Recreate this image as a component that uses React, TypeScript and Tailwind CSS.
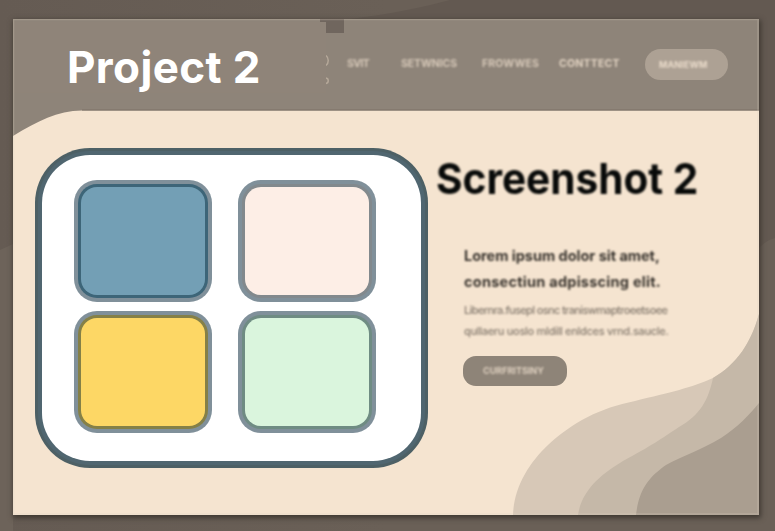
import React from "react";

const tiles = [
  { rim: "bg-[#3d6578]", fill: "bg-[#739fb5]" },
  { rim: "bg-[#82898d]", fill: "bg-[#fdeee6]" },
  { rim: "bg-[#858047]", fill: "bg-[#fdd765]" },
  { rim: "bg-[#6f8c83]", fill: "bg-[#daf5dd]" },
];

function Backdrop() {
  return (
    <svg className="absolute inset-0" width="775" height="531" viewBox="0 0 775 531">
      <defs>
        <linearGradient id="wall" x1="0" y1="0" x2="1" y2="0">
          <stop offset="0" stopColor="#655b53" />
          <stop offset="0.5" stopColor="#6a6057" />
          <stop offset="1" stopColor="#6a6057" />
        </linearGradient>
      </defs>
      <rect width="775" height="531" fill="url(#wall)" />
      <path d="M350 19C390 14 425 7 450 0H775V238C765 241 761 246 758 249V19Z" fill="#635951" />
      <path d="M0 250L13 244V531H0Z" fill="#6d635a" />
    </svg>
  );
}

function PageArt() {
  return (
    <svg className="absolute inset-0" width="746" height="496" viewBox="13 19 746 496">
      <path d="M13 19H759V110.500H82C57 111 38 121 13 136Z" fill="#8e8479" />
      <path d="M82 110H759" stroke="#7c7167" strokeWidth="1" />
      <path d="M320 19H344V33H320Z" fill="#70665e" />
      <path d="M326 55.500C329 58 329 63 326 65.500M326 78C329 78.500 329 83 326 83.500" fill="none" stroke="#b5a899" strokeWidth="1.500" />
      <path d="M13 22H326V92.500H13Z" fill="#8f8479" />
      <path d="M513 515C514 487 529 463 548 445C573 422 600 408 635 401C671 392 691 388 713 378C737 364 751 343 759 314V515Z" fill="#d7c8b7" />
      <path d="M578 515C582 489 603 473 623 461C651 446 661 439 679 427C700 415 708 401 713 378C737 364 751 343 759 314V515Z" fill="#c5b8a8" />
      <path d="M636 515C639 489 649 477 666 465C682 456 701 450 721 438C737 428 750 414 759 403V515Z" fill="#aa9e90" />
      <path d="M13.500 19V515M13 19.500H759M758 19V515M13 514H759" stroke="#ddd0c0" strokeWidth="1.500" opacity="0.25" fill="none" />
    </svg>
  );
}

export default function App() {
  return (
    <main className="relative h-[531px] w-[775px] overflow-hidden pl-[13px] pt-[19px] font-['Inter',sans-serif]">
      <Backdrop />
      <div className="relative h-[496px] w-[746px] bg-[#f5e4d0] shadow-[1px_2px_5px_1px_#3f3932]">
        <PageArt />
        <header className="relative flex h-[91px]">
          <h1 className="ml-[54px] mt-[22px] w-[262px] whitespace-nowrap text-[44px] font-bold leading-[53px] tracking-[0.35px] text-white">Project 2</h1>
          <nav className="mt-[29px] flex h-[31px] items-center whitespace-nowrap text-[10.500px] font-bold text-[#d6c8b8]">
            <span className="ml-[18px] w-[54px] tracking-[-0.6px] blur-[0.9px]">SVIT</span>
            <span className="w-[81px] tracking-[-0.1px] blur-[0.9px]">SETWNICS</span>
            <span className="w-[77px] tracking-[0.1px] blur-[0.9px]">FROWWES</span>
            <span className="w-[86px] tracking-[0.2px] text-[#e2d3c2] blur-[0.9px]">CONTTECT</span>
            <span className="mt-[2px] flex h-[31px] w-[83px] items-center rounded-full bg-[#ada194] pl-[14px] text-[9px] font-bold text-[#eadccb] blur-[0.5px]">
              <span className="tracking-[0.1px] blur-[0.8px]">MANIEWM</span>
            </span>
          </nav>
        </header>
        <div className="relative flex">
          <section className="ml-[22px] mt-[38px] h-[320px] w-[393px] rounded-[55px] bg-[#4d6065] p-[3px]">
            <div className="h-full rounded-[52px] bg-[#506670] p-1">
              <div className="grid h-full grid-cols-[138px_138px] grid-rows-[122px_122px] gap-x-[26px] gap-y-[9px] rounded-[48px] bg-white pl-[32px] pt-[25px]">
                {tiles.map((tile, i) => (
                  <div key={i} className="rounded-[23px] bg-[#80909a] p-1">
                    <div className={`h-full rounded-[19px] p-[3px] ${tile.rim}`}>
                      <div className={`h-full rounded-[16px] ${tile.fill}`} />
                    </div>
                  </div>
                ))}
              </div>
            </div>
          </section>
          <section className="ml-[8px] whitespace-nowrap pt-[42px]">
            <h2 className="w-[280px] origin-left scale-x-[0.943] text-[43px] font-bold leading-[52px] text-[#080a09] blur-[0.9px]">Screenshot 2</h2>
            <div className="ml-[28px] mt-[39px] text-[14.500px] font-bold leading-[26px] text-[#38332d] blur-[0.9px]">
              <p className="tracking-[-0.02px]">Lorem ipsum dolor sit amet,</p>
              <p className="tracking-[0.25px]">consectiun adpisscing elit.</p>
            </div>
            <div className="ml-[28px] mt-[5px] text-[11px] font-medium leading-[21px] text-[#857a6e] blur-[0.9px]">
              <p className="tracking-[-0.63px]">Libernra.fusepl osnc traniswmaptroeetsoee</p>
              <p className="tracking-[-0.3px]">qullaeru uoslo mldill enldces vrnd.saucle.</p>
            </div>
            <button className="ml-[27px] mt-[14px] flex h-[30px] w-[104px] items-center rounded-[13px] bg-[#8e8478] pl-[20px] text-[9px] font-bold text-[#dfd1c0] blur-[0.5px]">
              <span className="blur-[0.8px]">CURFRITSINY</span>
            </button>
          </section>
        </div>
      </div>
    </main>
  );
}
